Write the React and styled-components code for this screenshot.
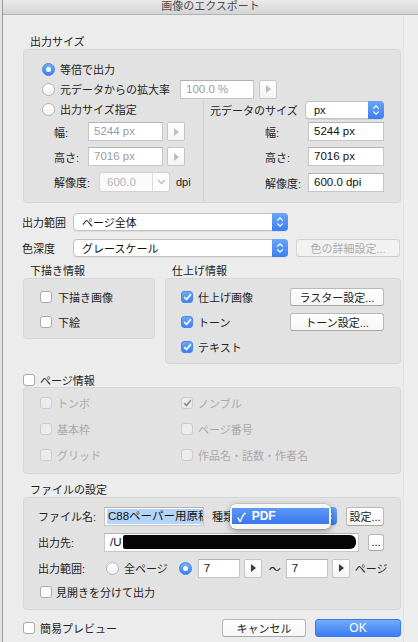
import React from "react";
import styled, { createGlobalStyle } from "styled-components";

const GlobalStyle = createGlobalStyle`
  html, body {
    margin: 0;
    padding: 0;
    background: #ececec;
  }
  body {
    font-family: "Liberation Sans", "Noto Sans CJK JP", sans-serif;
    font-size: 11px;
    color: #222;
  }
  * { box-sizing: border-box; }
`;

const Screen = styled.div`
  width: 418px;
  height: 642px;
  overflow: hidden;
  background: #e2e2e2;
  padding-left: 2px;
`;

const Window = styled.div`
  height: 100%;
  background: #ececec;
  border-left: 1px solid #9c9c9c;
  display: flex;
  flex-direction: column;
  position: relative;
`;

const TitleBar = styled.div`
  height: 15px;
  flex-shrink: 0;
  background: linear-gradient(#e9e9e9, #d4d4d4);
  border-bottom: 1px solid #b2b2b2;
  text-align: center;
  line-height: 13px;
  color: #4a4a4a;
  font-size: 11px;
`;

const RightStrip = styled.div`
  position: absolute;
  top: 15px;
  bottom: 0;
  left: 400px;
  right: 0;
  border-left: 1px solid #e2e2e2;
  background: #eeeeee;
`;

const Content = styled.div`
  width: 378px;
  margin-left: 20px;
  display: flex;
  flex-direction: column;
  position: relative;
  z-index: 1;
`;

const SectionLabel = styled.div`
  height: 14px;
  line-height: 14px;
  padding-left: 7px;
  margin-top: ${(p) => p.$mt || 0}px;
  white-space: nowrap;
`;

const GroupBox = styled.div`
  height: ${(p) => p.$h}px;
  width: ${(p) => (p.$w ? `${p.$w}px` : "auto")};
  background: #e2e2e2;
  border: 1px solid #d6d6d6;
  border-radius: 4px;
  padding-top: ${(p) => p.$pt || 0}px;
  padding-left: ${(p) => p.$pl || 0}px;
  padding-right: ${(p) => p.$pr || 0}px;
  display: flex;
  flex-direction: column;
`;

const Row = styled.div`
  display: flex;
  align-items: center;
  height: ${(p) => p.$h || 20}px;
  margin-top: ${(p) => p.$mt || 0}px;
  padding-left: ${(p) => p.$pl || 0}px;
  white-space: nowrap;
`;

const Label = styled.span`
  display: inline-block;
  width: ${(p) => (p.$w ? `${p.$w}px` : "auto")};
  margin-left: ${(p) => p.$ml || 0}px;
  margin-right: ${(p) => p.$mr || 0}px;
  color: ${(p) => (p.$disabled ? "#a9a9a9" : "#222")};
  flex-shrink: 0;
`;

const RadioGroupLabel = styled.span`
  display: flex;
  align-items: center;
  gap: 5px;
  width: ${(p) => (p.$w ? `${p.$w}px` : "auto")};
  flex-shrink: 0;
`;

const RadioCircle = styled.span`
  width: 13px;
  height: 13px;
  border-radius: 50%;
  flex-shrink: 0;
  display: flex;
  align-items: center;
  justify-content: center;
  border: 1px solid ${(p) => (p.$on ? "#3f82ee" : "#b4b4b4")};
  background: ${(p) =>
    p.$on ? "linear-gradient(#78b0fa, #3a80f3)" : "linear-gradient(#ffffff, #f3f3f3)"};
  margin-left: ${(p) => p.$ml || 0}px;
  &::after {
    content: "";
    display: ${(p) => (p.$on ? "block" : "none")};
    width: 5px;
    height: 5px;
    border-radius: 50%;
    background: #fff;
  }
`;

const CheckSquare = styled.span`
  width: 12px;
  height: 12px;
  border-radius: 3px;
  flex-shrink: 0;
  display: flex;
  align-items: center;
  justify-content: center;
  border: 1px solid
    ${(p) => (p.$on && !p.$disabled ? "#4a86ee" : p.$disabled ? "#cbcbcb" : "#a8a8a8")};
  background: ${(p) =>
    p.$on && !p.$disabled
      ? "linear-gradient(#6ea8f8, #3f80f1)"
      : p.$disabled
      ? "#ececec"
      : "#ffffff"};
`;

const CheckItem = styled.div`
  display: flex;
  align-items: center;
  gap: ${(p) => p.$gap || 5}px;
  height: ${(p) => p.$h || 25}px;
  white-space: nowrap;
  color: ${(p) => (p.$disabled ? "#a9a9a9" : "#222")};
`;

const TextField = styled.div`
  width: ${(p) => p.$w}px;
  height: 19px;
  flex-shrink: 0;
  background: #fff;
  border: 1px solid #c6c6c6;
  border-top-color: #b2b2b2;
  padding: 0 5px;
  line-height: 17px;
  font-size: 11.5px;
  color: ${(p) => (p.$disabled ? "#9c9c9c" : "#111")};
  overflow: hidden;
  white-space: nowrap;
  display: flex;
  align-items: center;
  margin-left: ${(p) => p.$ml || 0}px;
`;

const Selected = styled.span`
  background: #b5d4fb;
  padding: 0 3px 0 1px;
  margin-left: -3px;
  line-height: 15px;
`;

const Redacted = styled.span`
  flex: 1;
  height: 14px;
  background: #050505;
  border-radius: 2px 6px 6px 2px;
  margin-left: 1px;
  margin-right: -3px;
`;

const Stepper = styled.div`
  width: 18px;
  height: 19px;
  flex-shrink: 0;
  margin-left: ${(p) => p.$ml || 4}px;
  background: linear-gradient(#ffffff, #f4f4f4);
  border: 1px solid #c6c6c6;
  border-radius: 2px;
  display: flex;
  align-items: center;
  justify-content: center;
  &::after {
    content: "";
    border-left: 5px solid ${(p) => (p.$disabled ? "#bdbdbd" : "#3a3a3a")};
    border-top: 4px solid transparent;
    border-bottom: 4px solid transparent;
    margin-left: 1px;
  }
`;

const PopUp = styled.div`
  position: relative;
  width: ${(p) => p.$w}px;
  height: 18px;
  flex-shrink: 0;
  margin-left: ${(p) => p.$ml || 0}px;
  background: #fff;
  border: 1px solid #c2c2c2;
  border-radius: 4px;
  box-shadow: 0 1px 0 rgba(0, 0, 0, 0.06);
  display: flex;
  align-items: center;
  padding-left: 8px;
  font-size: 11px;
  color: #111;
  overflow: visible;
`;

const PopUpText = styled.span`
  flex: 1;
  white-space: nowrap;
  overflow: hidden;
`;

const PopUpArrows = styled.span`
  width: 16px;
  height: 18px;
  margin-right: -1px;
  margin-top: -1px;
  margin-bottom: -1px;
  border-radius: 0 4px 4px 0;
  background: linear-gradient(#6aa5f8, #3a7ef2);
  display: flex;
  align-items: center;
  justify-content: center;
`;

const DisabledCombo = styled.div`
  width: ${(p) => p.$w}px;
  height: 20px;
  flex-shrink: 0;
  border: 1px solid #d2d2d2;
  border-radius: 3px;
  background: #fbfbfb;
  display: flex;
  align-items: center;
  color: #b4b4b4;
  font-size: 11.5px;
  padding-left: 7px;
  margin-right: 6px;
`;

const ComboArrow = styled.span`
  width: 17px;
  height: 18px;
  margin-left: auto;
  border-left: 1px solid #dadada;
  display: flex;
  align-items: center;
  justify-content: center;
`;

const PushButton = styled.div`
  width: ${(p) => p.$w}px;
  height: ${(p) => p.$h || 18}px;
  flex-shrink: 0;
  margin-left: ${(p) => (p.$auto ? "auto" : `${p.$ml || 0}px`)};
  background: ${(p) => (p.$disabled ? "#f2f2f2" : "linear-gradient(#ffffff, #f6f6f6)")};
  border: 1px solid ${(p) => (p.$disabled ? "#d2d2d2" : "#b9b9b9")};
  border-bottom-color: ${(p) => (p.$disabled ? "#cccccc" : "#a6a6a6")};
  border-radius: 3px;
  color: ${(p) => (p.$disabled ? "#acacac" : "#222")};
  display: flex;
  align-items: center;
  justify-content: center;
  white-space: nowrap;
  font-size: 11px;
  letter-spacing: ${(p) => p.$ls || 0}px;
`;

const DefaultButton = styled(PushButton)`
  background: linear-gradient(#73adfb, #3a7cf3);
  border: 1px solid #3b78e6;
  color: #fff;
  font-size: 12px;
`;

const SizeColumns = styled.div`
  flex: 1;
  display: grid;
  grid-template-columns: 179px 1fr;
  margin-bottom: 1px;
`;

const LeftColumn = styled.div`
  display: flex;
  flex-direction: column;
`;

const RightColumn = styled.div`
  display: flex;
  flex-direction: column;
  border-left: 1px solid #cfcfcf;
  margin-top: 1px;
  padding-right: 16px;
`;

const Spacer = styled.span`
  margin-left: auto;
`;

const GroupsRow = styled.div`
  display: flex;
  gap: 10px;
`;

const GroupColumn = styled.div`
  display: flex;
  flex-direction: column;
`;

const OptionGrid = styled.div`
  display: grid;
  grid-template-columns: 141px 1fr;
  grid-auto-rows: 26px;
`;

const Tilde = styled.span`
  margin: 0 5px 0 7px;
  font-size: 12px;
`;

const TypeSelect = styled.div`
  position: relative;
  display: flex;
  align-items: center;
`;

const Menu = styled.div`
  position: absolute;
  left: -2px;
  top: -3px;
  width: 101px;
  height: 25px;
  padding: 4px 2px;
  background: #f7f7f7;
  border-radius: 6px;
  box-shadow: 0 2px 6px rgba(0, 0, 0, 0.35), 0 0 0 0.5px rgba(0, 0, 0, 0.15);
  z-index: 5;
`;

const MenuItem = styled.div`
  height: 16px;
  background: linear-gradient(#5d98f6, #3977ee);
  color: #fff;
  display: flex;
  align-items: center;
  font-size: 12px;
  padding-left: 5px;
  gap: 6px;
  font-weight: bold;
`;

const BottomBar = styled.div`
  display: flex;
  align-items: center;
  height: 18px;
  margin-top: 9px;
  gap: 5px;
`;

const Arrows = () => (
  <svg width="8" height="12" viewBox="0 0 8 12">
    <path d="M1.2 4.6 L4 1.8 L6.8 4.6" fill="none" stroke="#fff" strokeWidth="1.3" />
    <path d="M1.2 7.4 L4 10.2 L6.8 7.4" fill="none" stroke="#fff" strokeWidth="1.3" />
  </svg>
);

const DownChevron = () => (
  <svg width="9" height="6" viewBox="0 0 9 6">
    <path d="M1 1 L4.5 4.5 L8 1" fill="none" stroke="#b8b8b8" strokeWidth="1.2" />
  </svg>
);

const Tick = ({ color = "#fff" }) => (
  <svg width="9" height="8" viewBox="0 0 9 8">
    <path d="M1.2 4.2 L3.5 6.5 L7.8 1.3" fill="none" stroke={color} strokeWidth="1.7" />
  </svg>
);

const Radio = ({ on, label, ml }) => (
  <RadioGroupLabel>
    <RadioCircle $on={on} $ml={ml} />
    {label && <span>{label}</span>}
  </RadioGroupLabel>
);

const Check = ({ on, disabled, label, gap, h }) => (
  <CheckItem $disabled={disabled} $gap={gap} $h={h}>
    <CheckSquare $on={on} $disabled={disabled}>
      {on && <Tick color={disabled ? "#8c8c8c" : "#fff"} />}
    </CheckSquare>
    <span>{label}</span>
  </CheckItem>
);

const pageOptions = [
  { label: "トンボ" },
  { label: "ノンブル", on: true },
  { label: "基本枠" },
  { label: "ページ番号" },
  { label: "グリッド" },
  { label: "作品名・話数・作者名" },
];

export default function App() {
  return (
    <>
      <GlobalStyle />
      <Screen>
        <Window>
          <TitleBar>画像のエクスポート</TitleBar>
          <RightStrip />
          <Content>
            <SectionLabel $mt={20}>出力サイズ</SectionLabel>
            <GroupBox $h={154} $pt={9}>
              <Row $pl={18}>
                <Radio on label="等倍で出力" />
              </Row>
              <Row $pl={18}>
                <RadioGroupLabel $w={138}>
                  <RadioCircle />
                  <span>元データからの拡大率</span>
                </RadioGroupLabel>
                <TextField $w={74} $disabled>
                  100.0 %
                </TextField>
                <Stepper $disabled $ml={5} />
              </Row>
              <SizeColumns>
                <LeftColumn>
                  <Row $pl={18}>
                    <Radio label="出力サイズ指定" />
                  </Row>
                  <Row $pl={30} $mt={3} $h={19}>
                    <Label $w={34}>幅:</Label>
                    <TextField $w={75} $disabled>
                      5244 px
                    </TextField>
                    <Stepper $disabled />
                  </Row>
                  <Row $pl={30} $mt={6} $h={19}>
                    <Label $w={34}>高さ:</Label>
                    <TextField $w={75} $disabled>
                      7016 px
                    </TextField>
                    <Stepper $disabled />
                  </Row>
                  <Row $pl={30} $mt={6}>
                    <Label $w={45}>解像度:</Label>
                    <DisabledCombo $w={71}>
                      600.0
                      <ComboArrow>
                        <DownChevron />
                      </ComboArrow>
                    </DisabledCombo>
                    <Label>dpi</Label>
                  </Row>
                </LeftColumn>
                <RightColumn>
                  <Row $pl={6} $h={19}>
                    <Label>元データのサイズ</Label>
                    <Spacer />
                    <PopUp $w={79}>
                      <PopUpText>px</PopUpText>
                      <PopUpArrows>
                        <Arrows />
                      </PopUpArrows>
                    </PopUp>
                  </Row>
                  <Row $pl={61} $mt={3} $h={19}>
                    <Label $w={43}>幅:</Label>
                    <TextField $w={76}>5244 px</TextField>
                  </Row>
                  <Row $pl={61} $mt={6} $h={19}>
                    <Label $w={43}>高さ:</Label>
                    <TextField $w={76}>7016 px</TextField>
                  </Row>
                  <Row $pl={61} $mt={7} $h={19}>
                    <Label $w={43}>解像度:</Label>
                    <TextField $w={76}>600.0 dpi</TextField>
                  </Row>
                </RightColumn>
              </SizeColumns>
            </GroupBox>

            <Row $mt={10} $h={18}>
              <Label $w={50} $ml={-1}>
                出力範囲
              </Label>
              <PopUp $w={215} $ml={1}>
                <PopUpText>ページ全体</PopUpText>
                <PopUpArrows>
                  <Arrows />
                </PopUpArrows>
              </PopUp>
            </Row>
            <Row $mt={8} $h={18}>
              <Label $w={50} $ml={-1}>
                色深度
              </Label>
              <PopUp $w={215} $ml={1}>
                <PopUpText>グレースケール</PopUpText>
                <PopUpArrows>
                  <Arrows />
                </PopUpArrows>
              </PopUp>
              <PushButton $w={104} $ml={8} $disabled>
                色の詳細設定...
              </PushButton>
            </Row>

            <GroupsRow>
              <GroupColumn>
                <SectionLabel $mt={7}>下描き情報</SectionLabel>
                <GroupBox $h={61} $w={132} $pt={5} $pl={16}>
                  <Check label="下描き画像" gap={6} />
                  <Check label="下絵" gap={6} />
                </GroupBox>
              </GroupColumn>
              <GroupColumn>
                <SectionLabel $mt={7}>仕上げ情報</SectionLabel>
                <GroupBox $h={86} $w={236} $pt={5} $pl={15} $pr={16}>
                  <Row $h={25}>
                    <Check on label="仕上げ画像" />
                    <PushButton $w={94} $auto>
                      ラスター設定...
                    </PushButton>
                  </Row>
                  <Row $h={25}>
                    <Check on label="トーン" />
                    <PushButton $w={94} $auto>
                      トーン設定...
                    </PushButton>
                  </Row>
                  <Check on label="テキスト" />
                </GroupBox>
              </GroupColumn>
            </GroupsRow>

            <Row $mt={9} $h={14}>
              <Check label="ページ情報" h={14} />
            </Row>
            <GroupBox $h={87} $pt={2} $pl={16}>
              <OptionGrid>
                {pageOptions.map((o) => (
                  <Check key={o.label} label={o.label} on={o.on} disabled h={26} />
                ))}
              </OptionGrid>
            </GroupBox>

            <SectionLabel $mt={9}>ファイルの設定</SectionLabel>
            <GroupBox $h={113} $pt={5} $pl={14}>
              <Row $h={26}>
                <Label $w={66}>ファイル名:</Label>
                <TextField $w={100}>
                  <Selected>C88ペーパー用原稿</Selected>
                </TextField>
                <Label $ml={8} $w={20}>
                  種類
                </Label>
                <TypeSelect>
                  <PopUp $w={105}>
                    <PopUpText>PDF</PopUpText>
                    <PopUpArrows>
                      <Arrows />
                    </PopUpArrows>
                  </PopUp>
                  <Menu>
                    <MenuItem>
                      <span>✓</span>
                      <span>PDF</span>
                    </MenuItem>
                  </Menu>
                </TypeSelect>
                <PushButton $w={38} $h={19} $ml={9}>
                  設定...
                </PushButton>
              </Row>
              <Row $h={26}>
                <Label $w={66}>出力先:</Label>
                <TextField $w={255}>
                  /U
                  <Redacted />
                </TextField>
                <PushButton $w={16} $h={17} $ml={9}>
                  ...
                </PushButton>
              </Row>
              <Row $h={26}>
                <Label $w={68}>出力範囲:</Label>
                <Radio label="全ページ" />
                <RadioCircle $on $ml={11} />
                <TextField $w={42} $ml={6}>
                  7
                </TextField>
                <Stepper />
                <Tilde>〜</Tilde>
                <TextField $w={42}>7</TextField>
                <Stepper />
                <Label $ml={5}>ページ</Label>
              </Row>
              <Row $h={22} $pl={2}>
                <Check label="見開きを分けて出力" gap={4} h={22} />
              </Row>
            </GroupBox>

            <BottomBar>
              <Check label="簡易プレビュー" h={18} />
              <PushButton $w={84} $auto>
                キャンセル
              </PushButton>
              <DefaultButton $w={86} $ml={4}>
                OK
              </DefaultButton>
            </BottomBar>
          </Content>
        </Window>
      </Screen>
    </>
  );
}
